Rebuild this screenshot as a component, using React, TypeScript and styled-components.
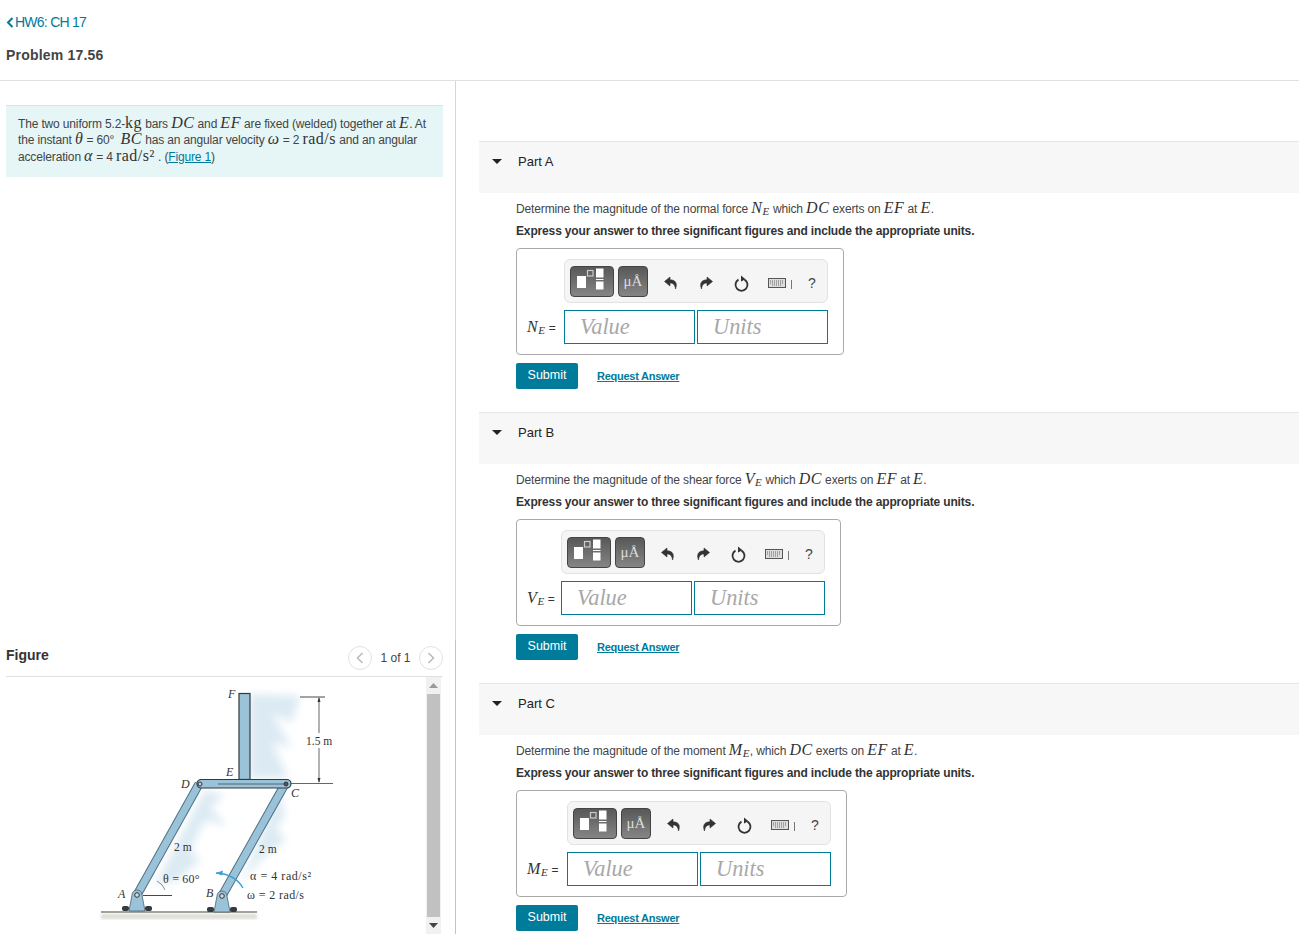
import React from "react";
import styled, {createGlobalStyle} from "styled-components";

const teal = "#007b9a";

const Global = createGlobalStyle`
  html, body {
    margin: 0;
    height: 934px;
    overflow: hidden;
    background: #fff;
    font-family: "Liberation Sans", Arial, sans-serif;
    color: #333;
  }
`;

const Page = styled.div`
  height: 934px;
  overflow: hidden;
`;

const Header = styled.header`
  height: 80px;
  box-sizing: content-box;
  border-bottom: 1px solid #e0e0e0;
  padding-left: 6px;
`;

const BackLink = styled.a`
  display: flex;
  align-items: center;
  gap: 1px;
  padding-top: 15px;
  height: 15px;
  font-size: 14px;
  letter-spacing: -0.75px;
  line-height: 15px;
  color: ${teal};
`;

const ProblemTitle = styled.h1`
  margin: 18px 0 0;
  font-size: 14px;
  line-height: 15px;
  font-weight: bold;
  letter-spacing: 0.2px;
  color: #444;
`;

const Columns = styled.div`
  display: flex;
  height: 853px;
`;

const LeftColumn = styled.div`
  width: 449px;
  padding-left: 6px;
  border-right: 1px solid;
  border-image: linear-gradient(#d4d6d8 0 559px, #b4c6d8 559px) 1;
  flex-shrink: 0;
`;

const Statement = styled.div`
  width: 413px;
  height: 56px;
  margin-top: 24px;
  padding: 9px 12px 6px;
  border-top: 1px solid #d5e3e6;
  background: #e6f5f6;
  font-size: 12px;
  letter-spacing: -0.15px;
  color: #444;
  box-sizing: content-box;
`;

const StatementLine = styled.div`
  height: 16.4px;
  line-height: 16.4px;
  white-space: nowrap;
`;

const Math = styled.span`
  font-family: "Liberation Serif", "DejaVu Serif", serif;
  font-style: ${p => (p.$upright ? "normal" : "italic")};
  font-size: 16px;
  line-height: 1;
  letter-spacing: 0.5px;
  color: #333;
`;

const Sub = styled.sub`
  font-size: 11px;
  line-height: 0;
  font-style: italic;
  vertical-align: -2px;
`;

const Sup = styled.sup`
  font-size: 10px;
  line-height: 0;
  vertical-align: 5px;
`;

const TextLink = styled.a`
  color: ${teal};
  text-decoration: underline;
`;

const FigureHead = styled.div`
  display: flex;
  align-items: center;
  justify-content: space-between;
  margin-top: 464px;
  height: 32px;
  width: 437px;
  padding-bottom: 3px;
  border-bottom: 1px solid #e0e0e0;
`;

const FigureTitle = styled.h2`
  margin: 0;
  padding-bottom: 4px;
  font-size: 14px;
  font-weight: bold;
  color: #333;
`;

const Pager = styled.div`
  display: flex;
  align-items: center;
  gap: 8.5px;
  padding-top: 2px;
  font-size: 12px;
  color: #444;
`;

const PagerButton = styled.span`
  display: flex;
  align-items: center;
  justify-content: center;
  width: 24px;
  height: 24px;
  box-sizing: border-box;
  border: 1px solid #e2e2e2;
  border-radius: 50%;
  color: #a9b4ba;
`;

const FigurePane = styled.div`
  display: flex;
  justify-content: space-between;
  width: 436px;
`;

const FigureSvg = styled.svg`
  display: block;
  margin-left: 84px;
  flex-shrink: 0;
`;

const ScrollTrack = styled.div`
  display: flex;
  flex-direction: column;
  align-items: center;
  width: 15px;
  height: 257px;
  margin-right: 1px;
  background: #f1f1f1;
`;

const ScrollThumb = styled.div`
  flex: 1;
  width: 13px;
  background: #c1c1c1;
`;

const ScrollArrow = styled.div`
  height: 17px;
  width: 100%;
  display: flex;
  align-items: center;
  justify-content: center;
`;

const RightColumn = styled.main`
  flex: 1;
  padding: 60px 0 0 23px;
  min-width: 0;
`;

const Part = styled.section`
  height: 271px;
`;

const PartHead = styled.div`
  display: flex;
  align-items: flex-start;
  height: 51px;
  border-top: 1px solid #e6e6e6;
  background: #f7f7f7;
  padding-left: 13px;
`;

const Caret = styled.span`
  width: 0;
  height: 0;
  margin-top: 17px;
  border-left: 5px solid transparent;
  border-right: 5px solid transparent;
  border-top: 5px solid #222;
`;

const PartTitle = styled.h3`
  margin: 12px 0 0 16px;
  font-size: 13px;
  line-height: 16px;
  font-weight: normal;
  color: #222;
`;

const PartBody = styled.div`
  padding-left: 37px;
`;

const Question = styled.p`
  margin: 7px 0 0;
  height: 16px;
  font-size: 12px;
  letter-spacing: -0.14px;
  line-height: 16px;
  color: #444;
`;

const Hint = styled.p`
  margin: 7px 0 0;
  height: 18px;
  font-size: 12px;
  letter-spacing: -0.15px;
  line-height: 17px;
  font-weight: bold;
  color: #333;
`;

const AnswerBox = styled.div`
  display: inline-grid;
  grid-template-columns: auto 264px;
  column-gap: 7px;
  row-gap: 7px;
  margin-top: 7px;
  padding: 10px 15px 10px 10px;
  border: 1px solid #aaa;
  border-radius: 4px;
  vertical-align: top;
`;

const Toolbar = styled.div`
  grid-column: 2;
  display: flex;
  align-items: center;
  height: 44px;
  box-sizing: border-box;
  padding-left: 5px;
  border: 1px solid #e2e2e2;
  border-radius: 6px;
  background: #f5f5f5;
`;

const ToolButton = styled.span`
  display: flex;
  align-items: center;
  justify-content: center;
  height: 31px;
  width: ${p => p.$w}px;
  margin-right: 4px;
  box-sizing: border-box;
  border: 1px solid #444;
  border-radius: 4px;
  background: linear-gradient(#585858, #858585);
  color: #ddd;
  font-family: "Liberation Serif", serif;
  font-size: 15px;
`;

const ToolIcon = styled.svg`
  display: block;
  flex-shrink: 0;
  margin: 4px 0 0 ${p => p.$gap}px;
`;

const Separator = styled.span`
  width: 1px;
  height: 9px;
  margin: 6px 0 0 5px;
  background: #777;
`;

const Help = styled.span`
  margin: 3px 0 0 16px;
  font-size: 14px;
  color: #444;
`;

const FieldLabel = styled.div`
  align-self: center;
  width: ${p => p.$w}px;
  white-space: nowrap;
  font-size: 12px;
  letter-spacing: -0.2px;
  color: #333;

  ${Math} {
    font-size: 16px;
    letter-spacing: 0.6px;
  }
`;

const Inputs = styled.div`
  display: flex;
  gap: 2px;
`;

const Field = styled.div`
  width: 131px;
  height: 34px;
  box-sizing: border-box;
  padding-left: 15px;
  border: 1px solid ${teal};
  font-family: "Liberation Serif", serif;
  font-style: italic;
  font-size: 22.4px;
  line-height: 32px;
  color: #a8a8a8;
`;

const Actions = styled.div`
  display: flex;
  align-items: center;
  margin-top: 8px;
`;

const SubmitButton = styled.button`
  width: 62px;
  height: 26px;
  border: 0;
  border-radius: 2px;
  padding: 0 0 2px;
  background: ${teal};
  color: #fff;
  font-family: inherit;
  font-size: 12.5px;
`;

const RequestLink = styled.a`
  margin-left: 19px;
  font-size: 11px;
  letter-spacing: -0.25px;
  font-weight: bold;
  color: ${teal};
  text-decoration: underline;
`;

function Toolset() {
    return (
        <Toolbar>
            <ToolButton $w={44}>
                <svg width="42" height="29" viewBox="0 0 42 29">
                    <rect x="6" y="9" width="9" height="12" fill="#fff"/>
                    <rect x="16.5" y="3.5" width="5.5" height="5.5" fill="none" stroke="#ccc" strokeWidth="1.2"/>
                    <rect x="25" y="1.5" width="7.5" height="9" fill="#fff"/>
                    <rect x="25" y="12" width="7.5" height="1" fill="#fff"/>
                    <rect x="25" y="14.5" width="7.5" height="8" fill="#fff"/>
                </svg>
            </ToolButton>
            <ToolButton $w={30}>μÅ</ToolButton>
            <ToolIcon $gap={12} width="14" height="14" viewBox="0 0 14 14">
                <path d="M6 1 L0.5 5.5 L6 10 V7 C9 7 11 8.5 11.5 13 C13.5 8 12 3.8 6 3.8 Z" fill="#333" stroke="#333" strokeWidth="0.6"/>
            </ToolIcon>
            <ToolIcon $gap={21} width="14" height="14" viewBox="0 0 14 14">
                <path d="M8 1 L13.5 5.5 L8 10 V7 C5 7 3 8.5 2.5 13 C0.5 8 2 3.8 8 3.8 Z" fill="#333" stroke="#333" strokeWidth="0.6"/>
            </ToolIcon>
            <ToolIcon $gap={21} width="15" height="17" viewBox="0 0 15 17">
                <path d="M4.5 4.6 A6 6 0 1 0 10.5 4.6" fill="none" stroke="#333" strokeWidth="1.8"/>
                <path d="M7 0.5 L11.5 4.3 L7 6.5 Z" fill="#333"/>
            </ToolIcon>
            <ToolIcon $gap={19} width="18" height="10" viewBox="0 0 18 10">
                <rect x="0.5" y="0.5" width="17" height="9" fill="#ddd" stroke="#555"/>
                <path d="M2 3 H16 M2 5 H16 M4 7 H14" stroke="#666" strokeDasharray="1 1"/>
            </ToolIcon>
            <Separator/>
            <Help>?</Help>
        </Toolbar>
    );
}

interface PartProps {
    name: string;
    question: React.ReactNode;
    symbol: string;
    labelWidth: number;
}

function PartBlock({name, question, symbol, labelWidth}: PartProps) {
    return (
        <Part>
            <PartHead>
                <Caret/>
                <PartTitle>{name}</PartTitle>
            </PartHead>
            <PartBody>
                <Question>{question}</Question>
                <Hint>Express your answer to three significant figures and include the appropriate units.</Hint>
                <AnswerBox>
                    <Toolset/>
                    <FieldLabel $w={labelWidth}><Math>{symbol}<Sub>E</Sub></Math> =</FieldLabel>
                    <Inputs>
                        <Field>Value</Field>
                        <Field>Units</Field>
                    </Inputs>
                </AnswerBox>
                <Actions>
                    <SubmitButton>Submit</SubmitButton>
                    <RequestLink>Request Answer</RequestLink>
                </Actions>
            </PartBody>
        </Part>
    );
}

const Serif = styled.text`
  font-family: "Liberation Serif", serif;
  font-size: ${p => p.$size || 12}px;
  font-style: ${p => (p.$italic ? "italic" : "normal")};
  letter-spacing: ${p => p.$track || 0}px;
  fill: #333;
`;

function Pin({x, y}: {x: number; y: number}) {
    return (
        <g>
            <rect x={x - 15} y={y + 11} width="7" height="5" rx="2" fill="#333b3f"/>
            <rect x={x + 8} y={y + 11} width="7" height="5" rx="2" fill="#333b3f"/>
            <path d={`M${x - 8} ${y + 16} L${x - 5} ${y} A5 5 0 0 1 ${x + 5} ${y} L${x + 8} ${y + 16} Z`}
                  fill="#9ac3da" stroke="#4a626e" strokeWidth="0.8"/>
            <circle cx={x} cy={y} r="2.3" fill="#d5dcdf" stroke="#333" strokeWidth="1"/>
        </g>
    );
}

function Figure() {
    return (
        <FigureSvg width="260" height="257" viewBox="90 677 260 257">
            <defs>
                <filter id="wash"><feGaussianBlur stdDeviation="4"/></filter>
                <filter id="soft"><feGaussianBlur stdDeviation="1.5"/></filter>
            </defs>
            <g fill="#dbeaf3" filter="url(#wash)">
                <path d="M250 694 L300 696 L292 722 L272 714 L292 748 L272 742 L288 778 L250 778 Z"/>
                <path d="M205 790 L224 795 L210 808 L228 826 L205 820 L190 850 L200 860 L178 880 L155 885 Z"/>
                <path d="M280 792 L285 815 L276 828 L286 840 L262 858 L240 885 Z"/>
            </g>
            <rect x="101" y="914" width="156" height="5" fill="#dcddd4" filter="url(#soft)"/>
            <line x1="101" y1="912" x2="257" y2="912" stroke="#80837a" strokeWidth="1.5"/>

            <line x1="137" y1="895" x2="199" y2="784" stroke="#4f6f80" strokeWidth="9"/>
            <line x1="137" y1="895" x2="199" y2="784" stroke="#9ac3da" strokeWidth="7"/>
            <line x1="222" y1="896" x2="285" y2="784" stroke="#4f6f80" strokeWidth="9"/>
            <line x1="222" y1="896" x2="285" y2="784" stroke="#9ac3da" strokeWidth="7"/>

            <rect x="239" y="693.5" width="11" height="86" fill="#9ac3da" stroke="#2f3b42" strokeWidth="1.2"/>
            <rect x="197" y="779.5" width="94" height="8.5" rx="4.2" fill="#9ac3da" stroke="#2f3b42" strokeWidth="1.2"/>
            <line x1="218" y1="784" x2="285" y2="784" stroke="#4f6470" strokeWidth="1.2"/>
            <circle cx="200" cy="784" r="2" fill="#ccd" stroke="#333"/>
            <circle cx="286" cy="784" r="2" fill="#556" stroke="#333"/>

            <Pin x={137} y={895}/>
            <Pin x={222} y={896}/>

            <line x1="300" y1="697" x2="325" y2="697" stroke="#333" strokeWidth="0.9"/>
            <line x1="291" y1="783.5" x2="333" y2="783.5" stroke="#555" strokeWidth="0.9"/>
            <path d="M319 698 V733 M319 748 V782" stroke="#555" strokeWidth="0.9"/>
            <path d="M319 697 L317.5 702 H320.5 Z M319 783 L317.5 778 H320.5 Z" fill="#333"/>
            <line x1="143" y1="895.5" x2="172" y2="895.5" stroke="#333" strokeWidth="0.9"/>
            <path d="M157 881 Q163 884 165 890" fill="none" stroke="#444" strokeWidth="0.6"/>
            <path d="M216 873 Q235 874 243 888" fill="none" stroke="#3da0d0" strokeWidth="1.4"/>
            <path d="M216 873 L223 870.5 L222 875.5 Z" fill="#3da0d0"/>

            <Serif x="228" y="698" $italic>F</Serif>
            <Serif x="226" y="776" $italic>E</Serif>
            <Serif x="181" y="788" $italic>D</Serif>
            <Serif x="291" y="797" $italic>C</Serif>
            <Serif x="118" y="898" $italic>A</Serif>
            <Serif x="206" y="897" $italic>B</Serif>
            <Serif x="306" y="745" $size={11.5}>1.5 m</Serif>
            <Serif x="174" y="851" $size={11.5}>2 m</Serif>
            <Serif x="259" y="853" $size={11.5}>2 m</Serif>
            <Serif x="163" y="883" $track={0.2}>θ = 60°</Serif>
            <Serif x="250" y="880" $track={0.55}>α = 4 rad/s²</Serif>
            <Serif x="247" y="899" $track={0.4}>ω = 2 rad/s</Serif>
        </FigureSvg>
    );
}

function Chevron({dir}: {dir: "left" | "right"}) {
    return (
        <svg width="8" height="12" viewBox="0 0 8 12">
            <path d={dir === "left" ? "M6.5 1 L1.5 6 L6.5 11" : "M1.5 1 L6.5 6 L1.5 11"} fill="none" stroke="#b4bec3" strokeWidth="1.6"/>
        </svg>
    );
}

export default function App() {
    return (
        <Page>
            <Global/>
            <Header>
                <BackLink>
                    <svg width="8" height="11" viewBox="0 0 8 11">
                        <path d="M6.5 1 L2 5.5 L6.5 10" fill="none" stroke={teal} strokeWidth="2"/>
                    </svg>
                    HW6: CH 17
                </BackLink>
                <ProblemTitle>Problem 17.56</ProblemTitle>
            </Header>
            <Columns>
                <LeftColumn>
                    <Statement>
                        <StatementLine>The two uniform 5.2-<Math $upright>kg</Math> bars <Math>DC</Math> and <Math>EF</Math> are fixed (welded) together at <Math>E</Math>. At</StatementLine>
                        <StatementLine>the instant <Math>θ</Math> = 60° &nbsp;<Math>BC</Math> has an angular velocity <Math>ω</Math> = 2 <Math $upright>rad/s</Math> and an angular</StatementLine>
                        <StatementLine>acceleration <Math>α</Math> = 4 <Math $upright>rad/s²</Math> . (<TextLink>Figure 1</TextLink>)</StatementLine>
                    </Statement>
                    <FigureHead>
                        <FigureTitle>Figure</FigureTitle>
                        <Pager>
                            <PagerButton><Chevron dir="left"/></PagerButton>
                            1 of 1
                            <PagerButton><Chevron dir="right"/></PagerButton>
                        </Pager>
                    </FigureHead>
                    <FigurePane>
                        <Figure/>
                        <ScrollTrack>
                            <ScrollArrow>
                                <svg width="9" height="5" viewBox="0 0 9 5"><path d="M4.5 0 L9 5 H0 Z" fill="#999"/></svg>
                            </ScrollArrow>
                            <ScrollThumb/>
                            <ScrollArrow>
                                <svg width="9" height="5" viewBox="0 0 9 5"><path d="M0 0 H9 L4.5 5 Z" fill="#444"/></svg>
                            </ScrollArrow>
                        </ScrollTrack>
                    </FigurePane>
                </LeftColumn>
                <RightColumn>
                    <PartBlock
                        name="Part A"
                        symbol="N"
                        labelWidth={30}
                        question={<>Determine the magnitude of the normal force <Math>N<Sub>E</Sub></Math> which <Math>DC</Math> exerts on <Math>EF</Math> at <Math>E</Math>.</>}
                    />
                    <PartBlock
                        name="Part B"
                        symbol="V"
                        labelWidth={27}
                        question={<>Determine the magnitude of the shear force <Math>V<Sub>E</Sub></Math> which <Math>DC</Math> exerts on <Math>EF</Math> at <Math>E</Math>.</>}
                    />
                    <PartBlock
                        name="Part C"
                        symbol="M"
                        labelWidth={33}
                        question={<>Determine the magnitude of the moment <Math>M<Sub>E</Sub></Math>, which <Math>DC</Math> exerts on <Math>EF</Math> at <Math>E</Math>.</>}
                    />
                </RightColumn>
            </Columns>
        </Page>
    );
}
